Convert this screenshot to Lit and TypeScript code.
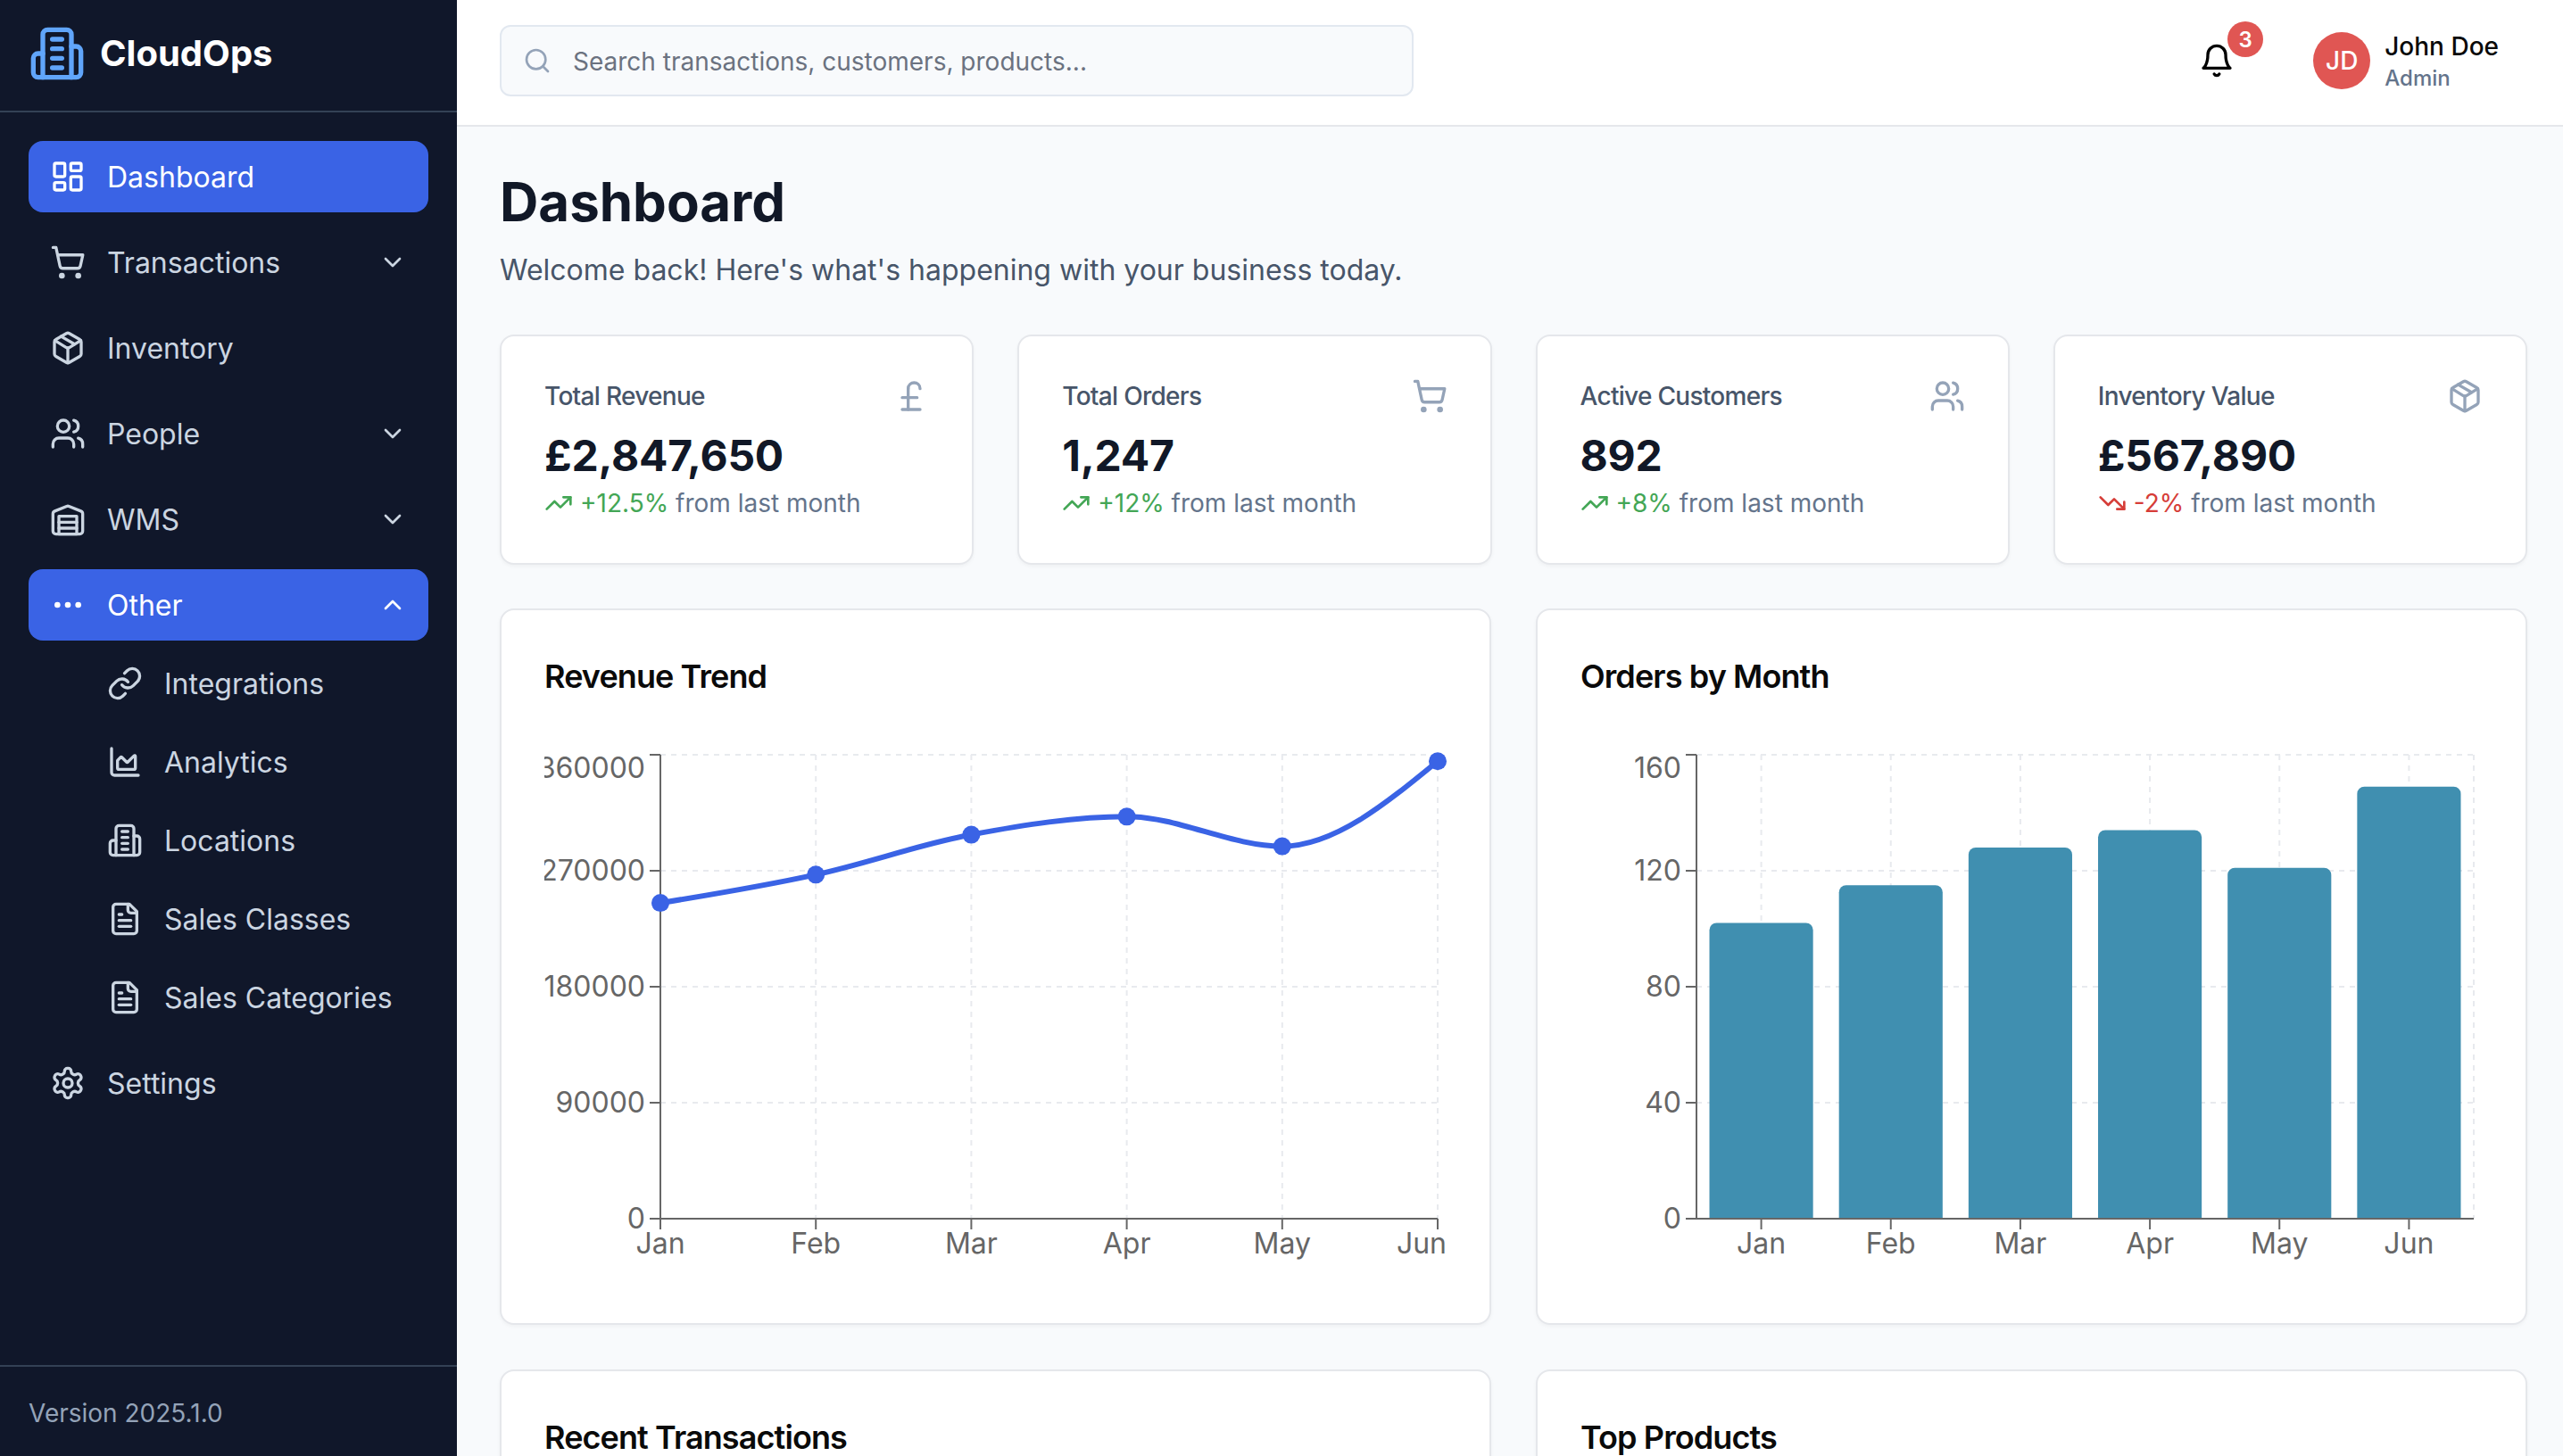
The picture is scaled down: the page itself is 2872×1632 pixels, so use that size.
import { LitElement, css, html, svg } from 'lit'
import { customElement, property } from 'lit/decorators.js'

// lucide outlines, 24 unit grid
const ICONS: Record<string, unknown> = {
  dashboard: svg`<rect width="7" height="9" x="3" y="3" rx="1"/><rect width="7" height="5" x="14" y="3" rx="1"/><rect width="7" height="9" x="14" y="12" rx="1"/><rect width="7" height="5" x="3" y="16" rx="1"/>`,
  cart: svg`<circle cx="8" cy="21" r="1"/><circle cx="19" cy="21" r="1"/><path d="M2.05 2.05h2l2.66 12.42a2 2 0 0 0 2 1.58h9.78a2 2 0 0 0 1.95-1.57l1.65-7.43H5.12"/>`,
  box: svg`<path d="M11 21.73a2 2 0 0 0 2 0l7-4A2 2 0 0 0 21 16V8a2 2 0 0 0-1-1.73l-7-4a2 2 0 0 0-2 0l-7 4A2 2 0 0 0 3 8v8a2 2 0 0 0 1 1.73z"/><path d="M12 22V12"/><path d="m3.3 7 7.703 4.734a2 2 0 0 0 1.994 0L20.7 7"/><path d="m7.5 4.27 9 5.15"/>`,
  users: svg`<path d="M16 21v-2a4 4 0 0 0-4-4H6a4 4 0 0 0-4 4v2"/><circle cx="9" cy="7" r="4"/><path d="M22 21v-2a4 4 0 0 0-3-3.87"/><path d="M16 3.13a4 4 0 0 1 0 7.75"/>`,
  warehouse: svg`<path d="M22 8.35V20a2 2 0 0 1-2 2H4a2 2 0 0 1-2-2V8.35A2 2 0 0 1 3.26 6.5l8-3.2a2 2 0 0 1 1.48 0l8 3.2A2 2 0 0 1 22 8.35Z"/><path d="M6 18h12"/><path d="M6 14h12"/><rect width="12" height="12" x="6" y="10"/>`,
  more: svg`<circle cx="12" cy="12" r="1"/><circle cx="19" cy="12" r="1"/><circle cx="5" cy="12" r="1"/>`,
  down: svg`<path d="m6 9 6 6 6-6"/>`,
  up: svg`<path d="m18 15-6-6-6 6"/>`,
  link: svg`<path d="M10 13a5 5 0 0 0 7.54.54l3-3a5 5 0 0 0-7.07-7.07l-1.72 1.71"/><path d="M14 11a5 5 0 0 0-7.54-.54l-3 3a5 5 0 0 0 7.07 7.07l1.71-1.71"/>`,
  area: svg`<path d="M3 3v16a2 2 0 0 0 2 2h16"/><path d="M7 11.207a.5.5 0 0 1 .146-.353l2-2a.5.5 0 0 1 .708 0l3.292 3.292a.5.5 0 0 0 .708 0l4.292-4.292a.5.5 0 0 1 .854.353V16a1 1 0 0 1-1 1H8a1 1 0 0 1-1-1z"/>`,
  building: svg`<path d="M6 22V4a2 2 0 0 1 2-2h8a2 2 0 0 1 2 2v18Z"/><path d="M6 12H4a2 2 0 0 0-2 2v6a2 2 0 0 0 2 2h2"/><path d="M18 9h2a2 2 0 0 1 2 2v9a2 2 0 0 1-2 2h-2"/><path d="M10 6h4"/><path d="M10 10h4"/><path d="M10 14h4"/><path d="M10 18h4"/>`,
  file: svg`<path d="M15 2H6a2 2 0 0 0-2 2v16a2 2 0 0 0 2 2h12a2 2 0 0 0 2-2V7Z"/><path d="M14 2v4a2 2 0 0 0 2 2h4"/><path d="M10 9H8"/><path d="M16 13H8"/><path d="M16 17H8"/>`,
  settings: svg`<path d="M12.22 2h-.44a2 2 0 0 0-2 2v.18a2 2 0 0 1-1 1.73l-.43.25a2 2 0 0 1-2 0l-.15-.08a2 2 0 0 0-2.73.73l-.22.38a2 2 0 0 0 .73 2.73l.15.1a2 2 0 0 1 1 1.72v.51a2 2 0 0 1-1 1.74l-.15.09a2 2 0 0 0-.73 2.73l.22.38a2 2 0 0 0 2.73.73l.15-.08a2 2 0 0 1 2 0l.43.25a2 2 0 0 1 1 1.73V20a2 2 0 0 0 2 2h.44a2 2 0 0 0 2-2v-.18a2 2 0 0 1 1-1.73l.43-.25a2 2 0 0 1 2 0l.15.08a2 2 0 0 0 2.73-.73l.22-.39a2 2 0 0 0-.73-2.73l-.15-.08a2 2 0 0 1-1-1.74v-.5a2 2 0 0 1 1-1.74l.15-.09a2 2 0 0 0 .73-2.73l-.22-.38a2 2 0 0 0-2.73-.73l-.15.08a2 2 0 0 1-2 0l-.43-.25a2 2 0 0 1-1-1.73V4a2 2 0 0 0-2-2z"/><circle cx="12" cy="12" r="3"/>`,
  search: svg`<circle cx="11" cy="11" r="8"/><path d="m21 21-4.3-4.3"/>`,
  bell: svg`<path d="M6 8a6 6 0 0 1 12 0c0 7 3 9 3 9H3s3-2 3-9"/><path d="M10.3 21a1.94 1.94 0 0 0 3.4 0"/>`,
  pound: svg`<path d="M18 7c0-5.333-8-5.333-8 0"/><path d="M10 7v14"/><path d="M6 21h12"/><path d="M6 13h10"/>`,
  trendUp: svg`<polyline points="22 7 13.5 15.5 8.5 10.5 2 17"/><polyline points="16 7 22 7 22 13"/>`,
  trendDown: svg`<polyline points="22 17 13.5 8.5 8.5 13.5 2 7"/><polyline points="16 17 22 17 22 11"/>`,
}

const icon = (name: string, size: number) => html`
  <svg
    width=${size}
    height=${size}
    viewBox="0 0 24 24"
    fill="none"
    stroke="currentColor"
    stroke-width="2"
    stroke-linecap="round"
    stroke-linejoin="round"
    style="flex:none;display:block"
  >
    ${ICONS[name]}
  </svg>
`

@customElement('app-sidebar')
export class AppSidebar extends LitElement {
  static styles = css`
    :host {
      display: flex;
      flex-direction: column;
      width: 512px;
      height: 1632px;
      flex: none;
      background: #10172a;
      color: #cbd5e1;
    }
    .brand {
      display: flex;
      align-items: center;
      gap: 16px;
      padding: 28px 32px 32px;
      border-bottom: 2px solid #334155;
      color: #60a5fa;
    }
    .brand span {
      color: #fff;
      font-size: 40px;
      font-weight: 700;
      line-height: 64px;
    }
    nav {
      flex: 1;
      display: flex;
      flex-direction: column;
      gap: 16px;
      padding: 32px;
    }
    .item {
      display: flex;
      align-items: center;
      gap: 24px;
      height: 80px;
      padding: 0 24px;
      border-radius: 16px;
      font-size: 32px;
    }
    .item .label {
      flex: 1;
    }
    .active {
      background: #3a63e5;
      color: #fff;
    }
    .subs {
      display: flex;
      flex-direction: column;
      gap: 16px;
      margin: -4px 0 4px;
      padding-left: 64px;
    }
    .sub {
      display: flex;
      align-items: center;
      gap: 24px;
      height: 72px;
      padding: 0 24px;
      font-size: 32px;
    }
    footer {
      height: 102px;
      box-sizing: border-box;
      display: flex;
      align-items: center;
      padding: 4px 32px 0;
      border-top: 2px solid #334155;
      color: #94a3b8;
      font-size: 28px;
    }
  `

  private navItem(name: string, label: string, active = false, chevron = '') {
    return html`
      <div class="item ${active ? 'active' : ''}">
        ${icon(name, 40)}
        <span class="label">${label}</span>
        ${chevron ? icon(chevron, 32) : ''}
      </div>
    `
  }

  render() {
    const subs = [
      ['link', 'Integrations'],
      ['area', 'Analytics'],
      ['building', 'Locations'],
      ['file', 'Sales Classes'],
      ['file', 'Sales Categories'],
    ]
    return html`
      <div class="brand">${icon('building', 64)}<span>CloudOps</span></div>
      <nav>
        ${this.navItem('dashboard', 'Dashboard', true)}
        ${this.navItem('cart', 'Transactions', false, 'down')}
        ${this.navItem('box', 'Inventory')}
        ${this.navItem('users', 'People', false, 'down')}
        ${this.navItem('warehouse', 'WMS', false, 'down')}
        ${this.navItem('more', 'Other', true, 'up')}
        <div class="subs">
          ${subs.map(([name, label]) => html`<div class="sub">${icon(name, 40)}<span>${label}</span></div>`)}
        </div>
        ${this.navItem('settings', 'Settings')}
      </nav>
      <footer>Version 2025.1.0</footer>
    `
  }
}

@customElement('app-topbar')
export class AppTopbar extends LitElement {
  static styles = css`
    :host {
      display: flex;
      align-items: center;
      justify-content: space-between;
      flex: none;
      padding: 28px 72px 32px 48px;
      background: #fff;
      border-bottom: 2px solid #e5e7eb;
    }
    .search {
      display: flex;
      align-items: center;
      gap: 24px;
      box-sizing: border-box;
      width: 1024px;
      height: 80px;
      padding: 0 24px;
      background: #f8fafc;
      border: 2px solid #e2e8f0;
      border-radius: 12px;
      color: #94a3b8;
    }
    .search span {
      padding-top: 2px;
      color: #6b7280;
      font-size: 28px;
    }
    .right {
      display: flex;
      align-items: center;
      gap: 88px;
    }
    .bell {
      position: relative;
      color: #000;
    }
    .badge {
      position: absolute;
      left: 32px;
      top: -24px;
      width: 40px;
      height: 40px;
      display: flex;
      align-items: center;
      justify-content: center;
      border-radius: 50%;
      background: #e05653;
      color: #fff;
      font-size: 24px;
      font-weight: 600;
    }
    .user {
      display: flex;
      align-items: center;
      gap: 16px;
    }
    .avatar {
      width: 64px;
      height: 64px;
      display: flex;
      align-items: center;
      justify-content: center;
      border-radius: 50%;
      background: #e05653;
      color: #fff;
      font-size: 28px;
      font-weight: 500;
    }
    .name {
      font-size: 28px;
      font-weight: 500;
      line-height: 40px;
      color: #0a0a0a;
    }
    .role {
      font-size: 24px;
      font-weight: 500;
      line-height: 32px;
      color: #64748b;
    }
  `

  render() {
    return html`
      <div class="search">${icon('search', 32)}<span>Search transactions, customers, products...</span></div>
      <div class="right">
        <div class="bell">${icon('bell', 40)}<div class="badge">3</div></div>
        <div class="user">
          <div class="avatar">JD</div>
          <div>
            <div class="name">John Doe</div>
            <div class="role">Admin</div>
          </div>
        </div>
      </div>
    `
  }
}

@customElement('stat-card')
export class StatCard extends LitElement {
  @property() label = ''
  @property() value = ''
  @property() delta = ''
  @property() icon = ''
  @property({ type: Boolean }) down = false

  static styles = css`
    :host {
      display: block;
      box-sizing: border-box;
      height: 258px;
      padding: 47px 48px 48px;
      background: #fff;
      border: 2px solid #e5e7eb;
      border-radius: 16px;
      box-shadow: 0 2px 4px rgba(0, 0, 0, 0.04);
    }
    .head {
      display: flex;
      align-items: center;
      justify-content: space-between;
      height: 40px;
      color: #94a3b8;
    }
    .label {
      color: #475569;
      font-size: 28px;
      font-weight: 500;
      letter-spacing: -0.7px;
    }
    .value {
      margin-top: 15px;
      color: #111827;
      font-size: 48px;
      font-weight: 700;
      line-height: 64px;
      letter-spacing: -0.2px;
    }
    .trend {
      display: flex;
      align-items: center;
      gap: 8px;
      margin-top: 1px;
      height: 40px;
      color: #64748b;
      font-size: 28px;
    }
    .up {
      color: #43a655;
    }
    .dn {
      color: #d63d38;
    }
  `

  render() {
    const tone = this.down ? 'dn' : 'up'
    return html`
      <div class="head"><span class="label">${this.label}</span>${icon(this.icon, 40)}</div>
      <div class="value">${this.value}</div>
      <div class="trend">
        <span class=${tone} style="display:flex">${icon(this.down ? 'trendDown' : 'trendUp', 32)}</span>
        <span><span class=${tone}>${this.delta}</span> from last month</span>
      </div>
    `
  }
}

// same plot box for both charts, in svg units (recharts margins)
const LEFT = 130
const RIGHT = 1001
const TOP = 10
const BOTTOM = 530
const MONTHS = ['Jan', 'Feb', 'Mar', 'Apr', 'May', 'Jun']

const yOf = (v: number, max: number) => BOTTOM - (v / max) * (BOTTOM - TOP)

// d3 curveMonotoneX
function monotonePath(pts: number[][]) {
  const n = pts.length
  const slopes = pts.slice(1).map((p, i) => (p[1] - pts[i][1]) / (p[0] - pts[i][0]))
  const t = pts.map((_, i) => {
    if (i === 0 || i === n - 1) return 0
    const a = slopes[i - 1]
    const b = slopes[i]
    if (a * b <= 0) return 0
    return ((Math.sign(a) + Math.sign(b)) * Math.min(Math.abs(a), Math.abs(b), Math.abs(a + b) / 4)) || 0
  })
  t[0] = (3 * slopes[0] - t[1]) / 2
  t[n - 1] = (3 * slopes[n - 2] - t[n - 2]) / 2
  let d = `M${pts[0][0]},${pts[0][1]}`
  for (let i = 1; i < n; i++) {
    const h = (pts[i][0] - pts[i - 1][0]) / 3
    d += `C${pts[i - 1][0] + h},${pts[i - 1][1] + h * t[i - 1]} ${pts[i][0] - h},${pts[i][1] - h * t[i]} ${pts[i][0]},${pts[i][1]}`
  }
  return d
}

function yAxis(ticks: number[], max: number) {
  return svg`
    <line class="axis" x1=${LEFT} y1=${TOP} x2=${LEFT} y2=${BOTTOM}></line>
    ${ticks.map((v) => {
      const y = yOf(v, max)
      // recharts nudges the top label down so it stays inside the box
      const base = v === max ? y + 26 : y + 11
      return svg`
        <line class="axis" x1=${LEFT - 12} y1=${y} x2=${LEFT} y2=${y}></line>
        <text class="tick" x="113" y=${base} text-anchor="end">${v}</text>
      `
    })}
  `
}

function xAxis(xs: number[]) {
  return svg`
    <line class="axis" x1=${LEFT} y1=${BOTTOM} x2=${RIGHT} y2=${BOTTOM}></line>
    ${xs.map(
      (x) => svg`<line class="axis" x1=${x} y1=${BOTTOM} x2=${x} y2=${BOTTOM + 12}></line>`
    )}
  `
}

function grid(xs: number[], ticks: number[], max: number) {
  return svg`
    ${ticks.map((v) => svg`<line class="grid" x1=${LEFT} x2=${RIGHT} y1=${yOf(v, max)} y2=${yOf(v, max)}></line>`)}
    ${xs.map((x) => svg`<line class="grid" x1=${x} x2=${x} y1=${TOP} y2=${BOTTOM}></line>`)}
  `
}

@customElement('revenue-chart')
export class RevenueChart extends LitElement {
  static styles = chartStyles()

  render() {
    const max = 360000
    const ticks = [0, 90000, 180000, 270000, 360000]
    const values = [245000, 267000, 298000, 312000, 289000, 355000]
    const step = (RIGHT - LEFT) / 5
    const xs = MONTHS.map((_, i) => LEFT + step * i)
    const pts = values.map((v, i) => [xs[i], yOf(v, max)])
    return html`
      <svg width="1011" height="600" viewBox="0 0 1011 600">
        ${grid(xs, ticks, max)} ${yAxis(ticks, max)} ${xAxis(xs)}
        <path class="line" d=${monotonePath(pts)}></path>
        ${pts.map((p) => svg`<circle class="dot" cx=${p[0]} cy=${p[1]} r="10"></circle>`)}
        ${MONTHS.map((m, i) => {
          // first label is centred on the tick, last one is pushed back to stay in the box
          const x = i === 5 ? RIGHT + 10 : xs[i]
          return svg`<text class="tick" x=${x} y="569" text-anchor=${i === 5 ? 'end' : 'middle'}>${m}</text>`
        })}
      </svg>
    `
  }
}

@customElement('orders-chart')
export class OrdersChart extends LitElement {
  static styles = chartStyles()

  render() {
    const max = 160
    const ticks = [0, 40, 80, 120, 160]
    const values = [102, 115, 128, 134, 121, 149]
    const band = (RIGHT - LEFT) / 6
    const barW = band * 0.8
    const xs = MONTHS.map((_, i) => LEFT + band * (i + 0.5))
    return html`
      <svg width="1011" height="600" viewBox="0 0 1011 600">
        ${grid([...xs, RIGHT], ticks, max)}
        ${values.map((v, i) => {
          const x = xs[i] - barW / 2
          const y = yOf(v, max)
          return svg`<path class="bar" d="M${x},${BOTTOM}V${y + 8}a8,8 0 0 1 8,-8H${x + barW - 8}a8,8 0 0 1 8,8V${BOTTOM}Z"></path>`
        })}
        ${yAxis(ticks, max)} ${xAxis(xs)}
        ${MONTHS.map((m, i) => svg`<text class="tick" x=${xs[i]} y="569" text-anchor="middle">${m}</text>`)}
      </svg>
    `
  }
}

function chartStyles() {
  return css`
    :host {
      display: block;
      height: 600px;
    }
    svg {
      display: block;
    }
    .grid {
      stroke: #e8eaee;
      stroke-width: 2;
      stroke-dasharray: 6 6;
    }
    .axis {
      stroke: #666;
      stroke-width: 2;
    }
    .tick {
      fill: #666;
      font-size: 32px;
    }
    .line {
      fill: none;
      stroke: #3a63e5;
      stroke-width: 6;
    }
    .dot {
      fill: #3a63e5;
    }
    .bar {
      fill: #408fb0;
    }
  `
}

@customElement('app-root')
export class AppRoot extends LitElement {
  static styles = css`
    :host {
      display: flex;
      width: 2872px;
      height: 1632px;
      overflow: hidden;
      background: #f8fafc;
      font-family: Inter, 'Liberation Sans', sans-serif;
    }
    .shell {
      flex: 1;
      min-width: 0;
      display: flex;
      flex-direction: column;
    }
    main {
      flex: 1;
      min-height: 0;
      overflow: hidden;
      padding: 48px 40px 0 48px;
    }
    h1 {
      margin: 0;
      color: #111827;
      font-size: 60px;
      font-weight: 700;
      line-height: 72px;
    }
    .sub {
      margin: 17px 0 48px;
      color: #475569;
      font-size: 32px;
      line-height: 48px;
    }
    .stats {
      display: grid;
      grid-template-columns: repeat(4, 1fr);
      gap: 49px;
      margin-bottom: 49px;
    }
    .charts {
      display: grid;
      grid-template-columns: repeat(2, 1fr);
      gap: 50px;
    }
    .card {
      box-sizing: border-box;
      padding: 48px;
      background: #fff;
      border: 2px solid #e5e7eb;
      border-radius: 16px;
      box-shadow: 0 2px 4px rgba(0, 0, 0, 0.04);
    }
    .card.plot {
      height: 803px;
    }
    .card.tall {
      height: 700px;
    }
    h3 {
      margin: -2px 0 50px;
      color: #0a0a0a;
      font-size: 36px;
      font-weight: 600;
      line-height: 56px;
      letter-spacing: -0.9px;
    }
  `

  render() {
    return html`
      <app-sidebar></app-sidebar>
      <div class="shell">
        <app-topbar></app-topbar>
        <main>
          <h1>Dashboard</h1>
          <p class="sub">Welcome back! Here's what's happening with your business today.</p>
          <div class="stats">
            <stat-card label="Total Revenue" value="£2,847,650" delta="+12.5%" icon="pound"></stat-card>
            <stat-card label="Total Orders" value="1,247" delta="+12%" icon="cart"></stat-card>
            <stat-card label="Active Customers" value="892" delta="+8%" icon="users"></stat-card>
            <stat-card label="Inventory Value" value="£567,890" delta="-2%" icon="box" down></stat-card>
          </div>
          <div class="charts">
            <div class="card plot"><h3>Revenue Trend</h3><revenue-chart></revenue-chart></div>
            <div class="card plot"><h3>Orders by Month</h3><orders-chart></orders-chart></div>
            <div class="card tall"><h3>Recent Transactions</h3></div>
            <div class="card tall"><h3>Top Products</h3></div>
          </div>
        </main>
      </div>
    `
  }
}
